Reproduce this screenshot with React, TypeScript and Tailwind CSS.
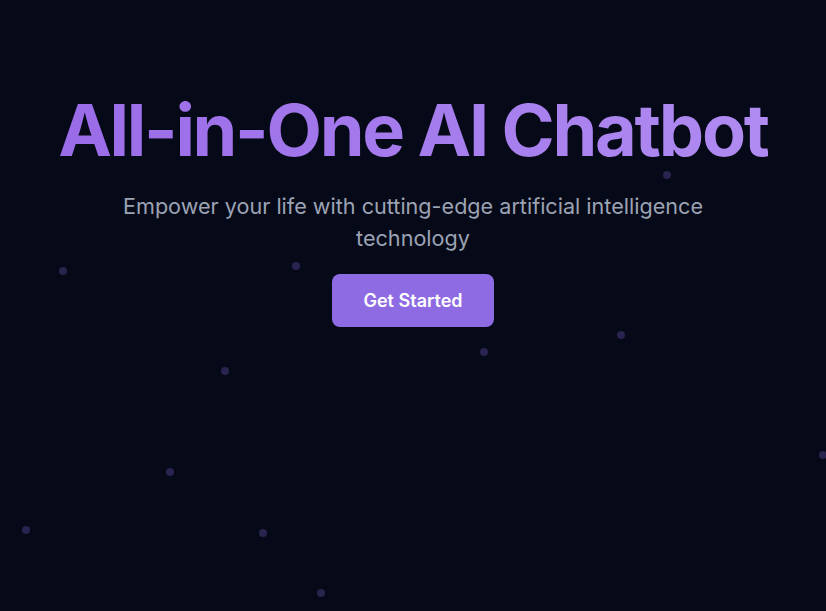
import React from 'react';

// decorative particles scattered over the hero
const dots = [
  { x: 667, y: 175 },
  { x: 63, y: 271 },
  { x: 296, y: 266 },
  { x: 225, y: 371 },
  { x: 484, y: 352 },
  { x: 621, y: 335 },
  { x: 170, y: 472 },
  { x: 26, y: 530 },
  { x: 263, y: 533 },
  { x: 321, y: 593 },
  { x: 823, y: 455 },
];

export default function App() {
  return (
    <div
      className="relative min-h-screen w-full overflow-hidden bg-[#060a18]"
      style={{ fontFamily: 'Inter, "Noto Sans", sans-serif' }}
    >
      {/* Particles */}
      {dots.map((d, i) => (
        <span
          key={i}
          className="absolute h-2 w-2 -translate-x-1/2 -translate-y-1/2 rounded-full bg-[#29234f]"
          style={{ left: d.x, top: d.y }}
        />
      ))}

      {/* Hero */}
      <div className="relative flex flex-col items-center px-4 pt-[94px] text-center">
        <h1 className="bg-linear-to-r from-[#9a6be8] to-[#b08bf1] bg-clip-text text-7xl leading-none font-bold tracking-[-0.032em] text-transparent">
          All-in-One AI Chatbot
        </h1>
        <p className="mt-6 max-w-2xl text-[21.6px] leading-8 text-[#9ca3b4]">
          Empower your life with cutting-edge artificial intelligence technology
        </p>
        <button className="mt-5 h-[53px] rounded-lg bg-[#8e6be3] px-[31px] text-lg font-semibold text-white">
          Get Started
        </button>
      </div>
    </div>
  );
}
